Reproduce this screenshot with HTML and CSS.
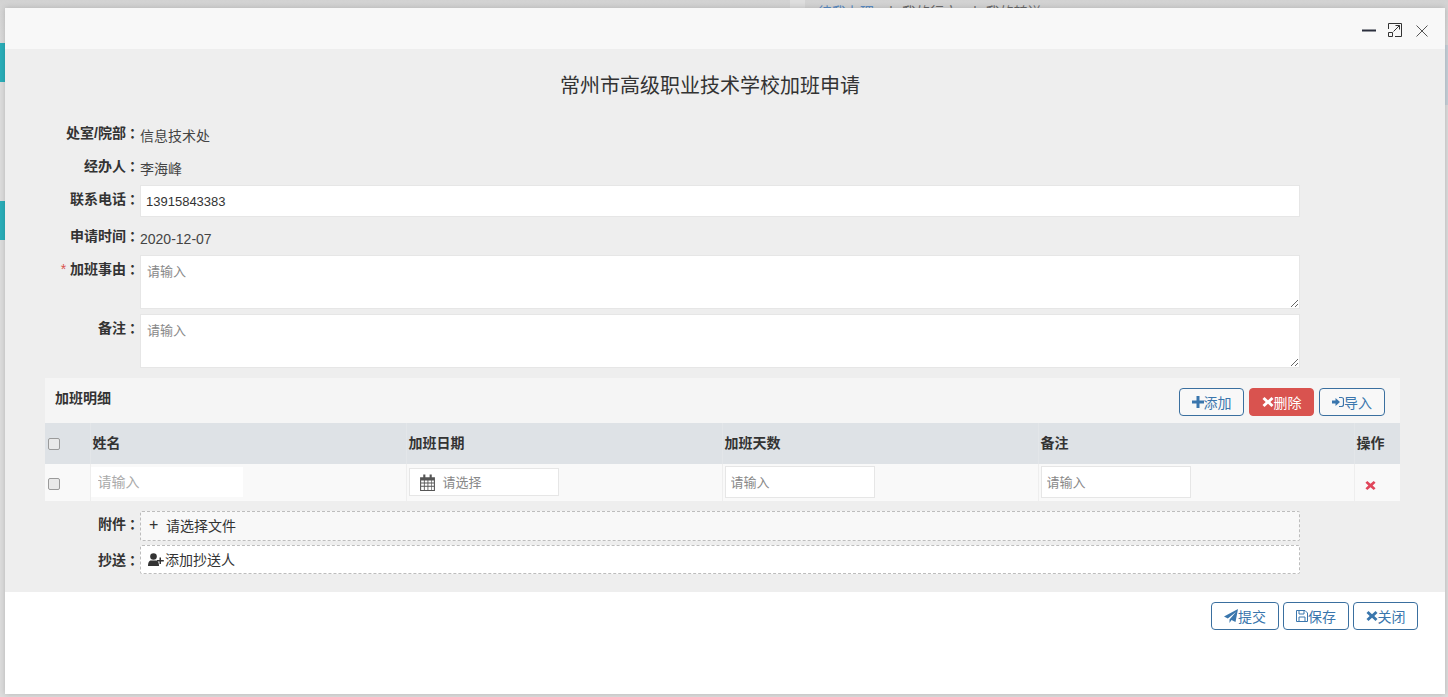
FILE: index.html
```html
<!DOCTYPE html>
<html lang="zh">
<head>
<meta charset="utf-8">
<title>加班申请</title>
<link rel="stylesheet" href="styles.css">
</head>
<body>
<div class="backdrop">
  <div class="side-tab side-tab-first"></div>
  <div class="side-tab side-tab-second"></div>
  <div class="back-band"></div>
  <div class="back-right"></div>
  <div class="back-nav"><span class="back-link">待我办理</span><span>丨 我的行文</span><span>丨 我的转送</span></div>
</div>
<div class="modal">
  <header class="modal-head">
    <svg class="win-icon win-min" viewBox="0 0 14 14"><path d="M0 7.500h14" stroke="#2b2f3d" stroke-width="2"/></svg>
    <svg class="win-icon win-max" viewBox="0 0 14 14" fill="none" stroke="#333" stroke-width="1"><path d="M.5 6V.5h13v13H7"/><path d="M.5 9.500h4v4h-4zM5.500 8.500l6-6M7.500 2.500h4v4"/></svg>
    <svg class="win-icon win-close" viewBox="0 0 14 14" fill="none" stroke="#555" stroke-width="1"><path d="M1.500 1.500l11 11M12.500 1.500l-11 11"/></svg>
  </header>
  <main class="modal-body">
    <h1 class="form-title">常州市高级职业技术学校加班申请</h1>
    <div class="row row-text row-first"><label class="lbl">处室/院部<span class="colon">：</span></label><span class="val">信息技术处</span></div>
    <div class="row row-text row-second"><label class="lbl">经办人<span class="colon">：</span></label><span class="val">李海峰</span></div>
    <div class="row row-input"><label class="lbl">联系电话<span class="colon">：</span></label><input class="field" value="13915843383"></div>
    <div class="row row-text row-date"><label class="lbl">申请时间<span class="colon">：</span></label><span class="val">2020-12-07</span></div>
    <div class="row row-area"><label class="lbl"><em class="req">*</em> 加班事由<span class="colon">：</span></label><textarea class="area" placeholder="请输入"></textarea></div>
    <div class="row row-area"><label class="lbl">备注<span class="colon">：</span></label><textarea class="area" placeholder="请输入"></textarea></div>

    <section class="detail">
      <div class="detail-head">
        <span class="detail-title">加班明细</span>
        <div class="detail-btns">
          <button class="btn"><svg class="ico" viewBox="0 0 12 12"><path fill="currentColor" d="M4.500 0h3v4.500H12v3H7.500V12h-3V7.500H0v-3h4.500z"/></svg>添加</button>
          <button class="btn btn-danger"><svg class="ico" viewBox="0 0 12 12"><path fill="currentColor" d="M2.500 1L6 4.200 9.500 1 11.500 3 8.300 6l3.200 3-2 2L6 7.800 2.500 11l-2-2 3.200-3L.5 3z"/></svg>删除</button>
          <button class="btn"><svg class="ico" viewBox="0 0 12 12"><path fill="currentColor" d="M0 4.500h3.500V2L8 6l-4.500 4V7.500H0z"/><path fill="none" stroke="currentColor" stroke-width="1.200" d="M7 1.500h2.500a2 2 0 0 1 2 2v5a2 2 0 0 1-2 2H7"/></svg>导入</button>
        </div>
      </div>
      <table class="grid">
        <colgroup><col class="c-check"><col class="c-data"><col class="c-data"><col class="c-data"><col class="c-data"><col class="c-op"></colgroup>
        <thead>
          <tr><th><input type="checkbox" class="chk"></th><th>姓名</th><th>加班日期</th><th>加班天数</th><th>备注</th><th>操作</th></tr>
        </thead>
        <tbody>
          <tr>
            <td><input type="checkbox" class="chk"></td>
            <td><input class="cell-name" placeholder="请输入"></td>
            <td><div class="cell-date">
              <svg class="cal" viewBox="1 0 14 16"><path fill="#555" d="M1 3h14v13H1zM4 0.500h2V4.500H4zM10 0.500h2V4.500h-2z"/><path fill="#fff" d="M2 6h2.600v2H2zM5.400 6H8v2H5.400zM8.800 6h2.600v2H8.800zM12 6h2v2h-2zM2 9h2.600v2H2zM5.400 9H8v2H5.400zM8.800 9h2.600v2H8.800zM12 9h2v2h-2zM2 12h2.600v3H2zM5.400 12H8v3H5.400zM8.800 12h2.600v3H8.800zM12 12h2v3h-2z"/></svg>
              <span class="ph">请选择</span></div></td>
            <td><input class="cell-input" placeholder="请输入"></td>
            <td><input class="cell-input" placeholder="请输入"></td>
            <td class="op"><svg class="del" viewBox="0 0 12 12"><path fill="#e0455a" d="M2.500 1L6 4.200 9.500 1 11.500 3 8.300 6l3.200 3-2 2L6 7.800 2.500 11l-2-2 3.200-3L.5 3z"/></svg></td>
          </tr>
        </tbody>
      </table>
    </section>

    <div class="row row-attach"><label class="lbl">附件<span class="colon">：</span></label><div class="dash dash-file"><span class="plus">+</span>请选择文件</div></div>
    <div class="row row-copy"><label class="lbl">抄送<span class="colon">：</span></label><div class="dash dash-copy"><svg class="user" viewBox="0 0 16 13"><circle cx="5.500" cy="3.500" r="3.300" fill="#333"/><path fill="#333" d="M0 13c0-4 1.500-5.500 3-5.500h5c1.500 0 3 1.500 3 5.500z"/><path fill="#333" d="M11.500 4.500h1.500v2.500h2.800v1.500H13v2.500h-1.500V8.500H9V7h2.500z"/></svg>添加抄送人</div></div>
  </main>
  <footer class="modal-foot">
    <button class="btn btn-send"><svg class="ico" viewBox="0 0 14 14"><path fill="currentColor" d="M14 0L11.500 13 7.500 11 5.500 14V10.500L12 3 3.800 9.500 0 7.500z"/></svg>提交</button>
    <button class="btn btn-save"><svg class="ico" viewBox="0 0 12 12"><path fill="none" stroke="currentColor" d="M.5.500h8.500l2.500 2.500v8.500H.5zM3 .500v3.500h5V.500M3 11.500V7h6v4.500"/></svg>保存</button>
    <button class="btn btn-shut"><svg class="ico" viewBox="0 0 12 12"><path fill="currentColor" d="M2.500 1L6 4.200 9.500 1 11.500 3 8.300 6l3.200 3-2 2L6 7.800 2.500 11l-2-2 3.200-3L.5 3z"/></svg>关闭</button>
  </footer>
</div>
</body>
</html>
```

FILE: styles.css
```css
* { box-sizing: border-box; }
html, body { margin: 0; height: 100%; overflow: hidden; }
body {
  background: #dcdcdc;
  font-family: "Liberation Sans", "Noto Sans CJK SC", sans-serif;
  font-size: 14px;
  color: #333;
}

/* dimmed page behind the dialog */
.backdrop {
  position: absolute;
  inset: 0;
  background: linear-gradient(#d2d2d2 0, #d6d6d6 10px, #dddddd 60px);
}
.side-tab {
  position: absolute;
  left: 0;
  width: 5px;
  height: 39px;
  background: #2aafba;
}
.side-tab-first { top: 43px; }
.side-tab-second { top: 201px; }
.back-band {
  position: absolute;
  left: 790px;
  top: 0;
  width: 15px;
  height: 8px;
  background: #dedede;
}
.back-right {
  position: absolute;
  left: 1445px;
  top: 45px;
  width: 3px;
  height: 60px;
  background: #c6d1d9;
}
.back-nav {
  position: absolute;
  left: 818px;
  top: 1px;
  display: flex;
  gap: 10px;
  font-size: 14px;
  color: #6a6a6a;
}
.back-link { color: #5b8cc4; }

/* dialog */
.modal {
  position: absolute;
  left: 5px;
  top: 8px;
  width: 1440px;
  height: 686px;
  display: flex;
  flex-direction: column;
  background: #fff;
  box-shadow: 0 0 6px rgba(0, 0, 0, .18);
}
.modal-head {
  height: 41px;
  flex: none;
  background: #f8f8f8;
  position: relative;
}
.win-icon { position: absolute; width: 14px; height: 14px; }
.win-min { left: 1357px; top: 15px; }
.win-max { left: 1383px; top: 15px; }
.win-close { left: 1410px; top: 16px; }

.modal-body {
  height: 543px;
  flex: none;
  background: #eeeeee;
  padding: 0 30px 0 0;
}
.form-title {
  margin: 0;
  padding-top: 25px;
  height: 70px;
  line-height: 24px;
  font-size: 20px;
  font-weight: 400;
  text-align: center;
  color: #333;
}

.row { display: flex; align-items: flex-start; }
.lbl {
  width: 135px;
  flex: none;
  text-align: right;
  font-weight: 700;
  font-size: 14px;
  line-height: 20px;
  color: #333;
  white-space: nowrap;
}
.colon { padding-left: 3px; letter-spacing: -3px; }
.req { color: #d9534f; font-style: normal; font-weight: 400; }
.val { font-size: 14px; line-height: 20px; color: #444; position: relative; top: 3px; }
.row-text { height: 33px; }
.row-first { margin-top: 4px; }
.row-second { height: 29px; }
.row-date { height: 29px; margin-top: 9px; }
.row-input { height: 32px; }
.row-input .lbl { padding-top: 4px; }
.field {
  width: 1160px;
  height: 32px;
  border: 1px solid #e6e6e6;
  background: #fff;
  padding: 0 5px;
  font: inherit;
  font-size: 13px;
  color: #333;
  outline: 0;
}
.row-area { height: 54px; margin-bottom: 5px; }
.row-area .lbl { padding-top: 4px; }
.area {
  width: 1160px;
  height: 54px;
  border: 1px solid #e6e6e6;
  background: #fff;
  padding: 5px 6px;
  font: inherit;
  font-size: 13px;
  resize: vertical;
  outline: 0;
  display: block;
}
::placeholder { color: #888; opacity: 1; }

/* detail table */
.detail { margin: 10px 0 0 40px; width: 1355px; }
.detail-head {
  height: 45px;
  background: #f5f5f5;
  display: flex;
  justify-content: space-between;
  padding: 10px 15px 0 10px;
}
.detail-title { font-weight: 700; font-size: 14px; line-height: 20px; }
.detail-btns { display: flex; gap: 5px; }
.btn {
  height: 28px;
  width: 65px;
  padding: 0;
  display: inline-flex;
  align-items: center;
  justify-content: center;
  font: inherit;
  font-size: 14px;
  color: #3a76ad;
  background: #fff;
  border: 1px solid #3a6f9f;
  border-radius: 4px;
}
.detail-btns .btn:last-child { width: 66px; }
.detail-head .btn { background: #f8f8f8; }
.btn-danger { background: #d9534f !important; border-color: #d9534f; color: #fff; }
.ico { width: 12px; height: 12px; flex: none; }

.grid { border-collapse: collapse; table-layout: fixed; width: 1355px; }
.c-check { width: 45px; }
.c-data { width: 316px; }
.c-op { width: 46px; }
.grid th {
  height: 41px;
  background: #dee2e6;
  text-align: left;
  font-size: 14px;
  padding: 0 0 3px 2px;
  border-left: 1px solid #e3e6e9;
  color: #333;
}
.grid td {
  height: 37px;
  background: #f9f9f9;
  padding: 0;
  border-left: 1px solid #eeeeee;
  border-bottom: 1px solid #eeeeee;
}
.grid th:first-child, .grid td:first-child { border-left: 0; padding-left: 3px; }
.chk {
  appearance: none;
  margin: 3px 0 0 0;
  width: 12px;
  height: 12px;
  display: block;
  background: #e9e9e9;
  border: 1px solid #9a9a9a;
  border-radius: 2px;
}
.cell-name {
  width: 152px;
  height: 30px;
  border: 0;
  background: #fff;
  padding: 0 7px;
  font: inherit;
  display: block;
}
.cell-name::placeholder { color: #aaa; }
.cell-date {
  margin-left: 2px;
  width: 150px;
  height: 28px;
  border: 1px solid #e6e6e6;
  background: #fff;
  display: flex;
  align-items: center;
  padding-left: 10px;
  gap: 8px;
}
.cal { width: 15px; height: 17px; }
.ph { color: #888; font-size: 13px; padding-bottom: 2px; }
.cell-input {
  margin-left: 2px;
  width: 150px;
  height: 32px;
  border: 1px solid #e6e6e6;
  background: #fff;
  padding: 0 5px;
  font: inherit;
  font-size: 13px;
  display: block;
}
.op { padding-left: 10px !important; }
.del { width: 11px; height: 11px; display: block; margin-top: 7px; }

.row-attach { margin-top: 9px; height: 30px; }
.row-copy { margin-top: 4px; height: 29px; }
.row-attach .lbl { padding-top: 3px; }
.row-copy .lbl { padding-top: 5px; }
.dash {
  width: 1160px;
  border: 1px dashed #bdbdbd;
  display: flex;
  align-items: center;
  font-size: 14px;
  color: #333;
  border-radius: 2px;
}
.dash-file { height: 30px; background: #f8f8f8; padding: 0 0 2px 8px; }
.dash-copy { height: 29px; background: #fff; padding-left: 7px; }
.plus { font-size: 16px; width: 17px; line-height: 1; }
.user { width: 16px; height: 13px; flex: none; margin-right: 1px; }

.modal-foot {
  flex: 1;
  display: flex;
  justify-content: flex-end;
  gap: 4px;
  padding: 10px 27px 0 0;
  background: #fff;
}
.modal-foot .btn { width: 68px; }
.modal-foot .btn-send .ico { width: 14px; height: 14px; }
.modal-foot .btn-save { width: 66px; }
.modal-foot .btn-shut { width: 65px; }
```
